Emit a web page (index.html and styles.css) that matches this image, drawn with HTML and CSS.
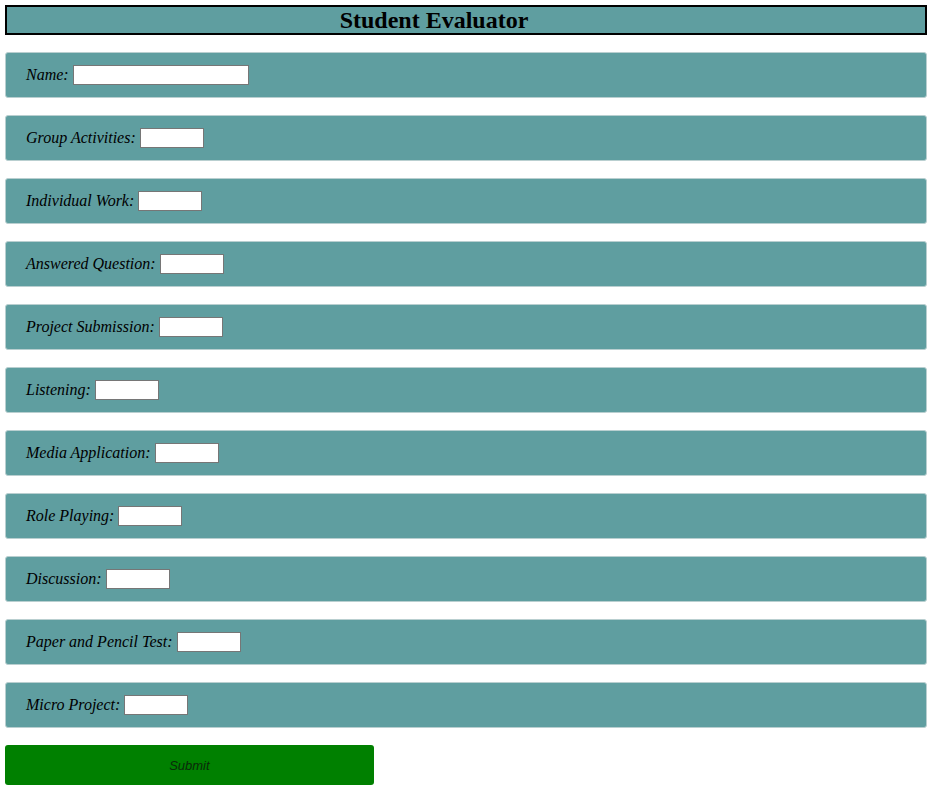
FILE: index.html
```html
<!DOCTYPE html>
<html>
<head>
<meta charset="utf-8">
<link rel="stylesheet" href="styles.css">
</head>
<body>
<h1 class="title">Student Evaluator</h1>
<form class="form">
  <div class="row"><label>Name:</label><input type="text" class="wide"></div>
  <div class="row"><label>Group Activities:</label><input type="text"></div>
  <div class="row"><label>Individual Work:</label><input type="text"></div>
  <div class="row"><label>Answered Question:</label><input type="text"></div>
  <div class="row"><label>Project Submission:</label><input type="text"></div>
  <div class="row"><label>Listening:</label><input type="text"></div>
  <div class="row"><label>Media Application:</label><input type="text"></div>
  <div class="row"><label>Role Playing:</label><input type="text"></div>
  <div class="row"><label>Discussion:</label><input type="text"></div>
  <div class="row"><label>Paper and Pencil Test:</label><input type="text"></div>
  <div class="row"><label>Micro Project:</label><input type="text"></div>
  <button type="button" class="submit">Submit</button>
</form>
</body>
</html>
```
FILE: styles.css
```css
html, body {
  margin: 0;
  background: #fff;
}
body {
  padding: 5px 2px 0 5px;
  font-family: "Liberation Serif", "Times New Roman", serif;
}
.title {
  margin: 0;
  height: 26px;
  line-height: 26px;
  padding-right: 64px;
  border: 2px solid #000;
  background: #5f9ea0;
  text-align: center;
  font-size: 24px;
  font-weight: bold;
  color: #000;
}
.form {
  display: flex;
  flex-direction: column;
  gap: 17px;
  padding-top: 17px;
}
.row {
  display: flex;
  align-items: center;
  height: 44px;
  padding: 0 20px;
  background: #5f9ea0;
  border: 1px solid #b9cfd0;
  border-radius: 3px;
}
.row label {
  font-style: italic;
  font-size: 16px;
  color: #000;
}
.row input {
  box-sizing: border-box;
  width: 64px;
  height: 20px;
  margin: 0 0 0 4px;
  border: 1px solid #767676;
  background: #fff;
  padding: 0;
}
.row input.wide {
  width: 176px;
}
.submit {
  width: 40%;
  height: 40px;
  margin: 0;
  border: none;
  border-radius: 3px;
  background: #008000;
  color: #0a2a0a;
  font-family: "Liberation Sans", Arial, sans-serif;
  font-style: italic;
  font-size: 13px;
  padding: 0;
}
```
